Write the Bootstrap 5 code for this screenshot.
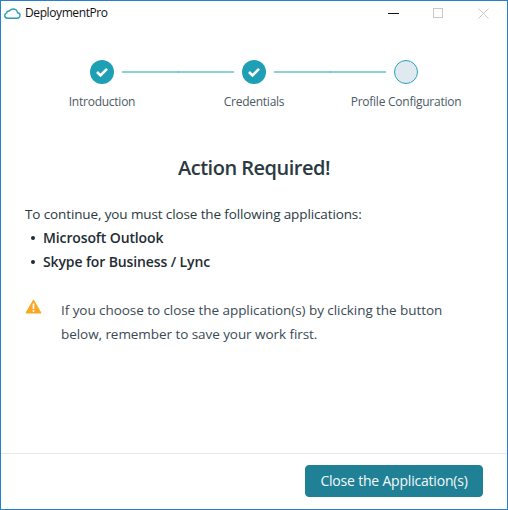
<!DOCTYPE html>
<html lang="en">
<head>
<meta charset="utf-8">
<title>DeploymentPro</title>
<link href="https://cdn.jsdelivr.net/npm/bootstrap@5.3.0/dist/css/bootstrap.min.css" rel="stylesheet">
<style>
html,body{height:100%;background:#fff}
body{font-family:"Open Sans","Noto Sans",sans-serif;color:#2b3a42;font-size:13.5px;letter-spacing:-.12px}
.win{height:510px;border:1px solid #2a7fc9}
.tbar{height:24px;color:#111;font-size:12px;padding-left:3px;letter-spacing:-.4px}
.ctrls{gap:34px;padding-right:18px}
.stepper{margin-top:35px;padding-left:89px;display:flex;align-items:center}
.dot{width:24px;height:24px;border-radius:50%;background:#1f9fb5;flex:none;display:flex;align-items:center;justify-content:center}
.dot.todo{background:#deeaf0;border:1px solid #2ea3b5}
.conn{width:112px;height:2px;margin:0 8px;background:linear-gradient(90deg,#8dd0da 49.8%,#6fc0cd 49.8%,#6fc0cd 50.6%,#8dd0da 50.6%)}
.labels{display:flex;color:#4a5a66;font-size:12px;letter-spacing:-.25px;margin-top:8px;padding-left:25px;height:20px;line-height:20px}
.lab{width:152px;text-align:center;white-space:nowrap}
.heading{font-size:20px;font-weight:600;text-align:center;margin:42px 0 0;color:#2b3a42;line-height:28px;letter-spacing:-.5px}
.bodybox{padding:0 24px;flex:1 1 auto}
.para{line-height:24px;margin:20px 0 0}
.apps{list-style:none;padding:0;margin:0;font-weight:600;color:#1f2c33;font-size:14px;letter-spacing:-.12px}
.apps li{line-height:24px;padding-left:18px;position:relative}
.apps li::before{content:"";position:absolute;left:6px;top:10px;width:4px;height:4px;border-radius:50%;background:#1f2c33}
.warnrow{margin-top:24px;display:flex}
.warnicon{width:36px;flex:none;line-height:0;padding-top:1px}
.warntext{line-height:24px;color:#3a4a55;width:405px;letter-spacing:-.06px}
.foot{border-top:1px solid #e2eaed;height:56px;padding:11px 24px 0 0;display:flex;justify-content:flex-end}
.cta{background:#208196;border:1px solid #208196;color:#f4fafb;width:178px;height:32px;border-radius:4px;font-size:14px;padding:0;line-height:30px;letter-spacing:-.2px}
</style>
</head>
<body>
<div class="win d-flex flex-column">
  <div class="tbar d-flex justify-content-between align-items-center">
    <div class="d-flex align-items-center gap-1">
      <svg width="17" height="11" viewBox="0 0 17 11" fill="none" stroke="#2a9db3" stroke-width="1.4"><path d="M4 10.2H12.8C15 10.2 16.2 8.6 16 7 15.8 5.6 14.8 4.8 13.6 4.8 13.2 2.4 11 .7 8.8 1 7 1.2 6 2 5.2 3 3.8 2.8 2.8 3.6 2.8 4.8 1.4 5.2.7 6.2.7 7.4.7 9 2 10.2 4 10.2Z"/></svg>
      <span>DeploymentPro</span>
    </div>
    <div class="ctrls d-flex">
      <svg width="11" height="11" viewBox="0 0 11 11"><path d="M0 5.5H11" stroke="#111" stroke-width="1"/></svg>
      <svg width="11" height="11" viewBox="0 0 11 11" fill="none"><rect x=".5" y=".5" width="9" height="9" stroke="#c8c8c8"/></svg>
      <svg width="11" height="11" viewBox="0 0 11 11" fill="none"><path d="M.5.5 10.5 10.5M10.5.5.5 10.5" stroke="#c8c8c8"/></svg>
    </div>
  </div>
  <div class="stepper">
    <div class="dot"><svg width="14" height="12" viewBox="0 0 14 12" fill="none"><path d="M2 6 5.5 9.5 12 2.8" stroke="#fff" stroke-width="2.6"/></svg></div>
    <div class="conn"></div>
    <div class="dot"><svg width="14" height="12" viewBox="0 0 14 12" fill="none"><path d="M2 6 5.5 9.5 12 2.8" stroke="#fff" stroke-width="2.6"/></svg></div>
    <div class="conn"></div>
    <div class="dot todo"></div>
  </div>
  <div class="labels">
    <div class="lab">Introduction</div>
    <div class="lab">Credentials</div>
    <div class="lab">Profile Configuration</div>
  </div>
  <div class="bodybox">
    <h1 class="heading">Action Required!</h1>
    <p class="para">To continue, you must close the following applications:</p>
    <ul class="apps">
      <li>Microsoft Outlook</li>
      <li>Skype for Business / Lync</li>
    </ul>
    <div class="warnrow">
      <div class="warnicon"><svg width="17" height="15" viewBox="0 0 17 15"><path d="M8.5 1 16 14H1Z" fill="#f9a825" stroke="#f9a825" stroke-linejoin="round"/><rect x="7.7" y="4.5" width="1.6" height="5.5" fill="#fff"/><rect x="7.7" y="11" width="1.6" height="1.8" fill="#fff"/></svg></div>
      <div class="warntext">If you choose to close the application(s) by clicking the button below, remember to save your work first.</div>
    </div>
  </div>
  <div class="foot">
    <button type="button" class="btn cta">Close the Application(s)</button>
  </div>
</div>
<script src="https://cdn.jsdelivr.net/npm/bootstrap@5.3.0/dist/js/bootstrap.bundle.min.js"></script>
</body>
</html>
